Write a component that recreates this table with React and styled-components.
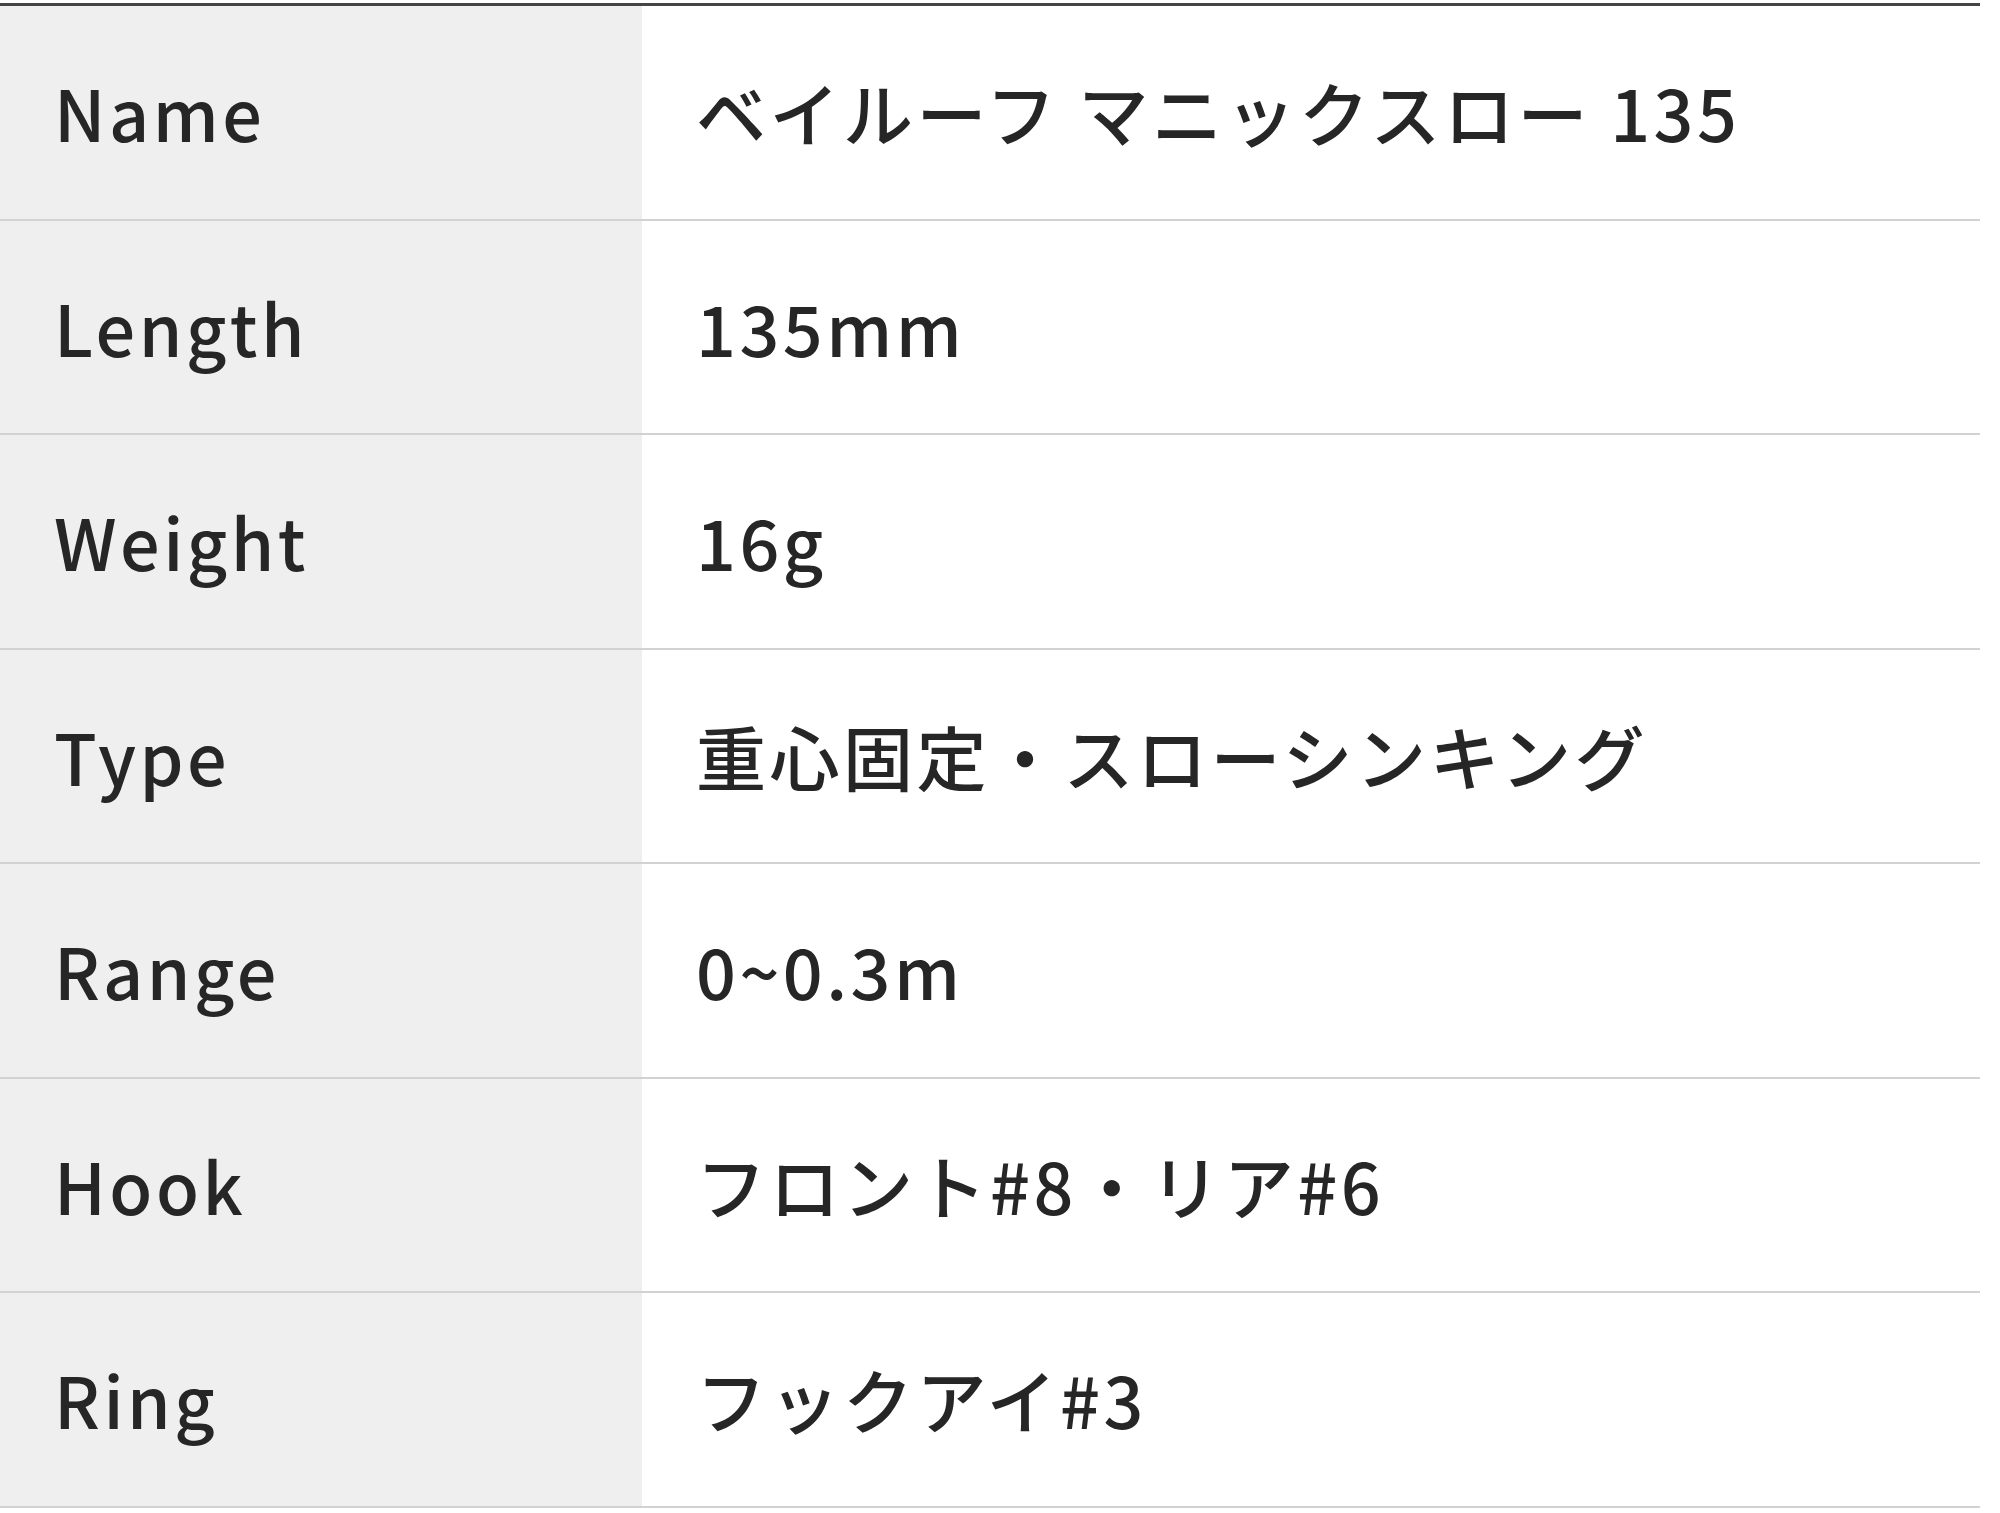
import React from "react";
import styled, { createGlobalStyle } from "styled-components";

const GlobalStyle = createGlobalStyle`
  html, body {
    margin: 0;
    padding: 0;
    background: #ffffff;
  }
  body {
    font-family: "Noto Sans CJK JP", "Noto Sans", sans-serif;
    color: #333333;
  }
`;

const SPECS = [
  { label: "Name", value: "ベイルーフ マニックスロー 135" },
  { label: "Length", value: "135mm" },
  { label: "Weight", value: "16g" },
  { label: "Type", value: "重心固定・スローシンキング" },
  { label: "Range", value: "0~0.3m" },
  { label: "Hook", value: "フロント#8・リア#6" },
  { label: "Ring", value: "フックアイ#3" },
];

const SpecTable = styled.div`
  width: 1980px;
  margin-top: 3px;
  border-top: 3px solid #444444;
`;

const SpecRow = styled.div`
  display: grid;
  grid-template-columns: 642px 1fr;
  height: 214.5px;
  box-sizing: border-box;
  border-bottom: 2px solid #d2d2d2;
`;

const Cell = styled.div`
  display: flex;
  align-items: center;
  padding: 0 54px;
  font-size: 70px;
  font-weight: 500;
  letter-spacing: 0.05em;
  line-height: 1;
  white-space: nowrap;
  color: #262626;
  background: ${(p) => (p.$head ? "#efefef" : "#ffffff")};
`;

const App = () => (
  <>
    <GlobalStyle />
    <SpecTable>
      {SPECS.map((spec) => (
        <SpecRow key={spec.label}>
          <Cell $head>{spec.label}</Cell>
          <Cell>{spec.value}</Cell>
        </SpecRow>
      ))}
    </SpecTable>
  </>
);

export default App;
